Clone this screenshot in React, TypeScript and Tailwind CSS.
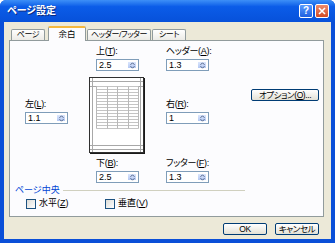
import type { ReactNode } from 'react';

// スピンボタン（上下矢印）
function Spin() {
  return (
    <div className="my-px mr-px flex w-[10px] items-center justify-center rounded-[1px] border border-white bg-linear-to-b from-[#DCE7FD] to-[#B3C7F2]">
      <svg width="5" height="7" viewBox="0 0 5 7">
        <path d="M0.5 2.8 L2.5 0.8 L4.5 2.8 M0.5 4.2 L2.5 6.2 L4.5 4.2" fill="none" stroke="#4D6185" strokeWidth="1" />
      </svg>
    </div>
  );
}

function Field({ label, accel, value }: { label: string; accel: string; value: string }) {
  return (
    <div className="flex flex-col">
      <span className="h-[11px] whitespace-nowrap text-[9px] leading-[11px] tracking-[-0.3px] text-black">
        {label}(<u>{accel}</u>):
      </span>
      <div className="mt-[2px] flex h-[12px] w-[43px] border border-[#7F9DB9] bg-white">
        <span className="flex-1 pl-[2px] text-[9px] leading-[10px] text-black">{value}</span>
        <Spin />
      </div>
    </div>
  );
}

function Tab({ children, active }: { children: ReactNode; active?: boolean }) {
  if (active) {
    return (
      <div className="relative z-10 -mb-px flex h-[15px] items-center justify-center whitespace-nowrap rounded-t-[2px] border-x border-t-2 border-x-[#919B9C] border-t-[#F5B83E] bg-[#FCFCFE] text-[8.5px] leading-[11px] text-black">
        {children}
      </div>
    );
  }
  return (
    <div className="flex h-[11px] items-center justify-center whitespace-nowrap rounded-t-[2px] border-x border-t border-[#919B9C] bg-linear-to-b from-white to-[#ECEBE6] text-[8px] leading-[10px] tracking-[-0.4px] text-black">
      {children}
    </div>
  );
}

function Check({ label, accel }: { label: string; accel: string }) {
  return (
    <div className="flex w-[79px] items-center gap-[3px]">
      <div className="h-[10px] w-[10px] border border-[#1C5180] bg-linear-to-br from-[#DCDCD7] to-white" />
      <span className="whitespace-nowrap text-[9px] leading-[11px] text-black">
        {label}(<u>{accel}</u>)
      </span>
    </div>
  );
}

function XpButton({ children, w }: { children: ReactNode; w: string }) {
  return (
    <div
      className={`flex h-[12px] items-center justify-center whitespace-nowrap rounded-[2px] border border-[#003C74] bg-linear-to-b from-white to-[#E3E1D6] text-[8.5px] leading-[10px] tracking-[-0.4px] text-black ${w}`}
    >
      {children}
    </div>
  );
}

// 余白プレビュー
function Preview() {
  const rows = Array.from({ length: 15 }, (_, i) => 9.5 + i * 3);
  const cols = [7.5, 18.5, 28.5, 39.5, 49.5];
  return (
    <svg width="57" height="78" viewBox="0 0 57 78" className="shrink-0">
      <rect x="0.5" y="0.5" width="54" height="75" fill="white" stroke="#303030" />
      <path d="M55.5 1V77 M1 76.5H56" stroke="#1A1A1A" />
      {/* 余白線 */}
      <path d="M1 4.5H54 M1 9.5H54 M1 68.5H54 M1 72.5H54 M3.5 1V75 M51.5 1V75" stroke="#A8A8A8" strokeWidth="1" />
      {/* セル */}
      {rows.map((y) => (
        <line key={y} x1="7.5" x2="49.5" y1={y} y2={y} stroke="#C4C4C4" strokeWidth="1" />
      ))}
      {cols.map((x) => (
        <line key={x} x1={x} x2={x} y1="9.5" y2="51.5" stroke="#B8B8B8" strokeWidth="1" />
      ))}
    </svg>
  );
}

export default function App() {
  return (
    <div className="h-[246px] w-[335px] bg-white font-['Liberation_Sans','Noto_Sans_CJK_JP',sans-serif] [font-feature-settings:'palt']">
      <div className="flex h-[243px] w-[335px] flex-col rounded-t-[6px] bg-[#0A4FD8]">
        {/* タイトルバー */}
        <div className="flex h-[22px] items-center rounded-t-[6px] bg-linear-to-b from-[#3D8FF7] via-[#0B5CE8] via-30% to-[#0751DA] pl-[7px]">
          <span className="text-[10px] font-bold leading-[12px] text-white [text-shadow:1px_1px_0_#0A2A80]">ページ設定</span>
          <div className="ml-auto mr-[6px] flex gap-[2px]">
            <div className="flex h-[14px] w-[14px] items-center justify-center rounded-[2px] border border-white bg-linear-to-b from-[#5A9BFF] to-[#1D5FE0] text-[10px] font-bold leading-none text-white">
              ?
            </div>
            <div className="flex h-[14px] w-[14px] items-center justify-center rounded-[2px] border border-white bg-linear-to-b from-[#EF8A6A] to-[#D24A22]">
              <svg width="8" height="8" viewBox="0 0 8 8">
                <path d="M1 1L7 7M7 1L1 7" stroke="white" strokeWidth="1.6" />
              </svg>
            </div>
          </div>
        </div>

        {/* 本体 */}
        <div className="mx-[4px] mb-[4px] flex flex-1 flex-col bg-[#ECE9D8] pl-[5px] pr-[7px] pt-[4px]">
          {/* タブ */}
          <div className="flex h-[14px] items-end pl-[2px]">
            <div className="w-[34px]">
              <Tab>ページ</Tab>
            </div>
            <div className="ml-[3px] w-[38px]">
              <Tab active>余白</Tab>
            </div>
            <div className="ml-px w-[64px]">
              <Tab>ヘッダー/フッター</Tab>
            </div>
            <div className="ml-px w-[34px]">
              <Tab>シート</Tab>
            </div>
          </div>

          {/* パネル */}
          <div className="flex h-[177px] flex-col border border-[#919B9C] bg-[#FCFCFE]">
            <div className="mt-[5px] flex pl-[86px]">
              <div className="w-[70px]">
                <Field label="上" accel="T" value="2.5" />
              </div>
              <Field label="ヘッダー" accel="A" value="1.3" />
            </div>

            <div className="mt-[6px] flex items-start">
              <div className="ml-[15px] w-[64px] pt-[22px]">
                <Field label="左" accel="L" value="1.1" />
              </div>
              <Preview />
              <div className="ml-[20px] w-[85px] pt-[22px]">
                <Field label="右" accel="R" value="1" />
              </div>
              <div className="mt-[12px]">
                <XpButton w="w-[68px]">
                  オプション(<u>O</u>)...
                </XpButton>
              </div>
            </div>

            <div className="mt-[3px] flex pl-[86px]">
              <div className="w-[70px]">
                <Field label="下" accel="B" value="2.5" />
              </div>
              <Field label="フッター" accel="F" value="1.3" />
            </div>

            <div className="mt-[2px] flex items-center">
              <span className="ml-[5px] text-[9px] leading-[11px] text-[#0046D5]">ページ中央</span>
              <div className="ml-[3px] mr-[78px] h-px flex-1 bg-[#D0D0BF]" />
            </div>

            <div className="mt-[2px] flex pl-[16px]">
              <Check label="水平" accel="Z" />
              <Check label="垂直" accel="V" />
            </div>
          </div>

          {/* ボタン */}
          <div className="mt-[6px] flex justify-end gap-[8px] pr-[5px]">
            <XpButton w="w-[44px]">OK</XpButton>
            <XpButton w="w-[44px]">キャンセル</XpButton>
          </div>
        </div>
      </div>
    </div>
  );
}
